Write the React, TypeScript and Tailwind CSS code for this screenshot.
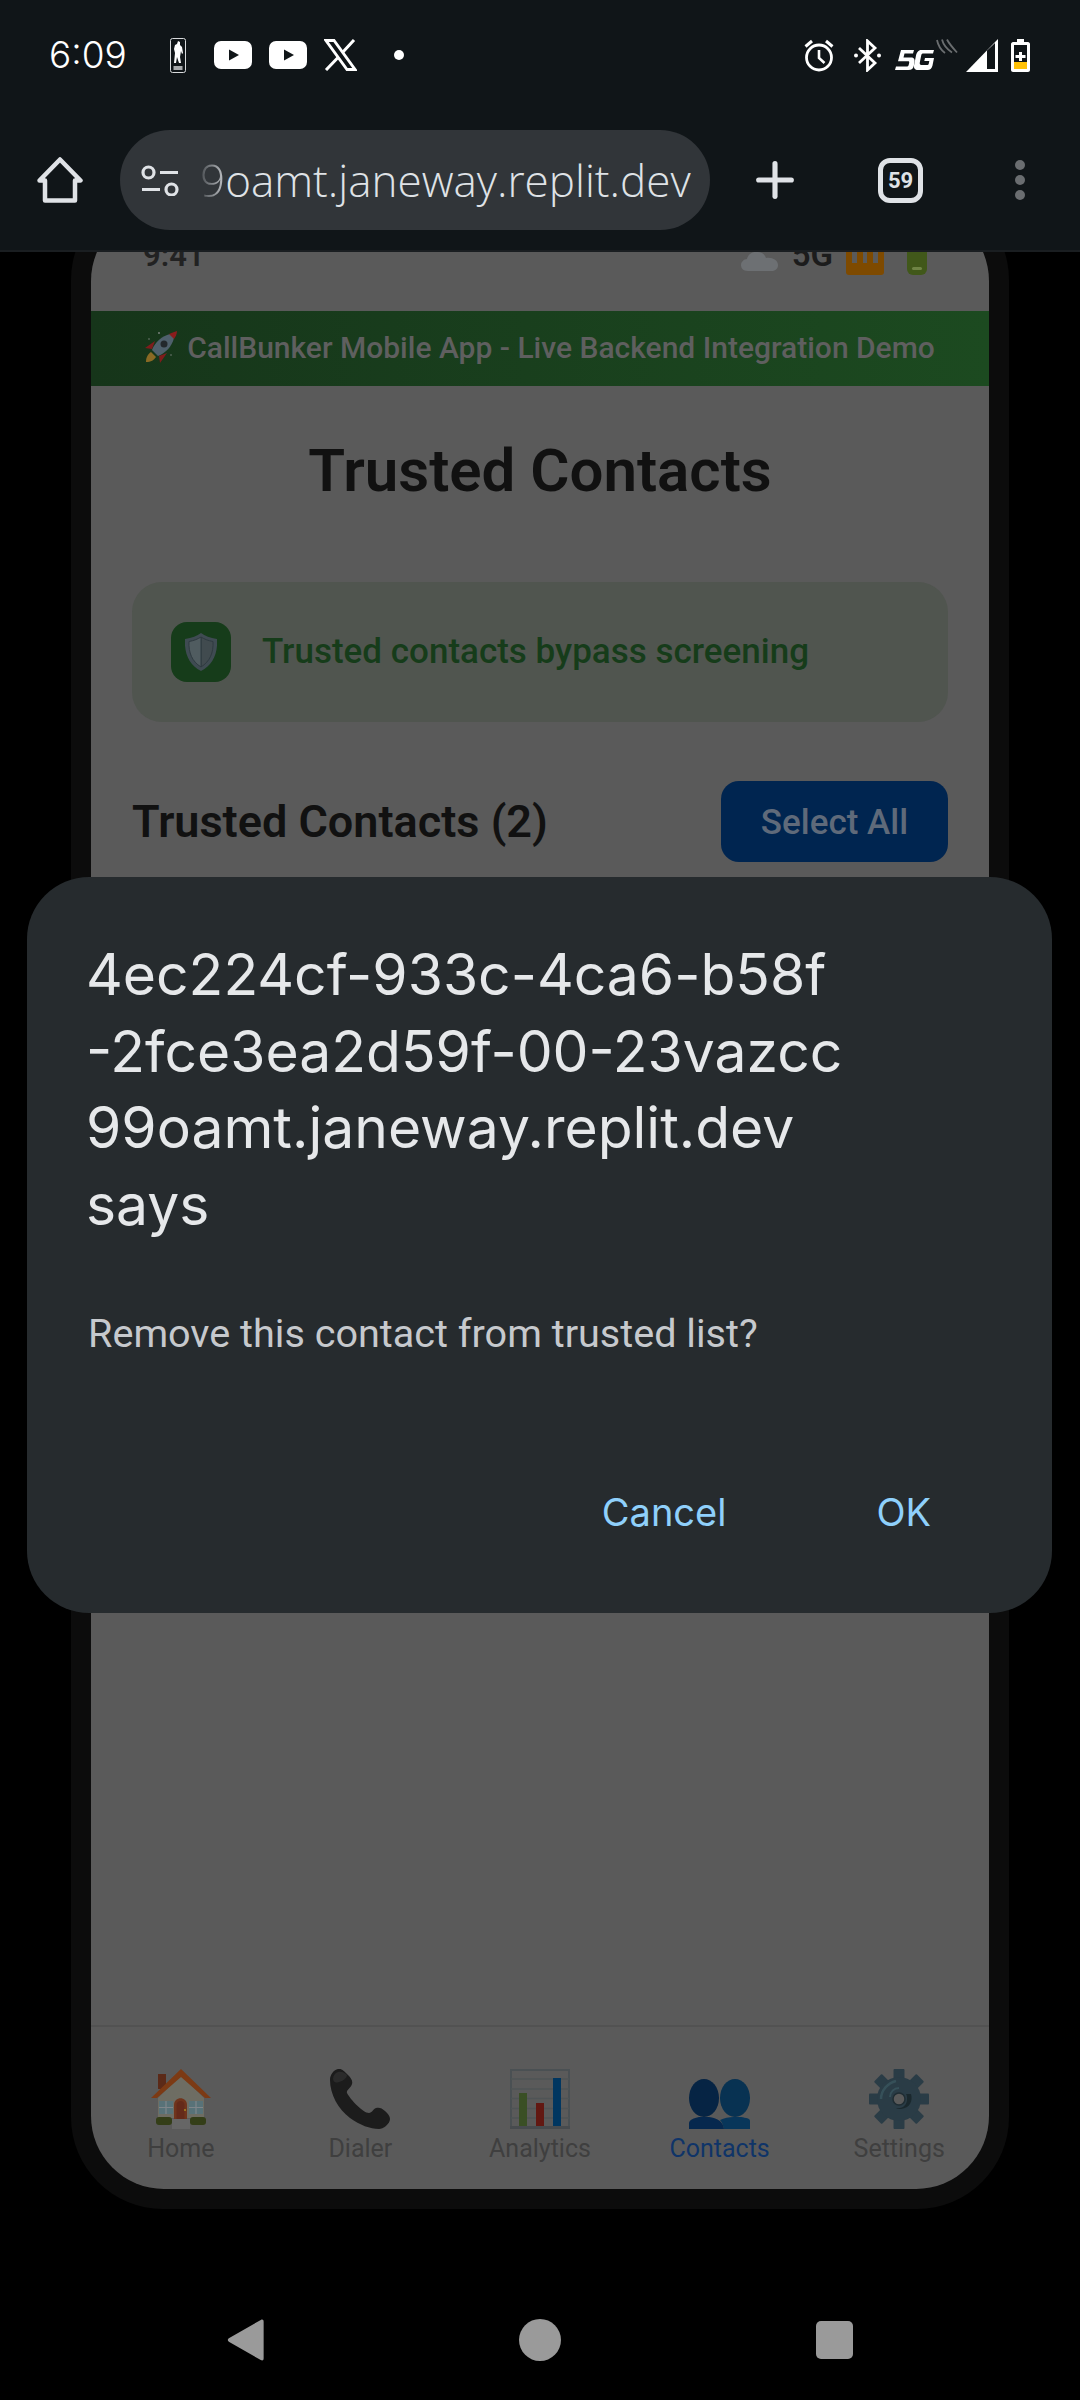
import { Plus } from "lucide-react";

const sans = "font-['Roboto',sans-serif]";
const urlFont = "font-['Open_Sans',sans-serif]";
const google = "font-['Inter',sans-serif]";

function NbaLogo() {
  return (
    <svg width="16" height="35" viewBox="0 0 16 35">
      <rect x="0.5" y="0.5" width="15" height="34" rx="2" fill="none" stroke="#d8dadc" strokeWidth="1" />
      <path d="M8 3l2 1 0 3 2 2 1 6-1 1-1-3-1 6 1 6h-2l-2-6-1 6H4l1-10-1-4 1-4 2-1z" fill="#fff" />
      <rect x="3.5" y="28" width="9" height="4" fill="#a8aaac" />
    </svg>
  );
}

function YouTube() {
  return (
    <svg width="38" height="28" viewBox="0 0 38 28">
      <rect width="38" height="28" rx="7" fill="#fff" />
      <path d="M15 8.500l10 5.500-10 5.500z" fill="#101518" />
    </svg>
  );
}

function XLogo() {
  return (
    <svg width="33" height="32" viewBox="0 0 33 32">
      <path d="M2 1.500h8L31 30.500h-8z" fill="none" stroke="#fff" strokeWidth="2.800" />
      <path d="M30 1L18.500 13.500M14 18.500L2 31" stroke="#fff" strokeWidth="3" />
    </svg>
  );
}

function Alarm() {
  return (
    <svg width="30" height="33" viewBox="0 0 30 33" fill="none" stroke="#fff">
      <circle cx="15" cy="18.500" r="12.500" strokeWidth="2.800" />
      <path d="M15 11v8l5.500 5" strokeWidth="2.600" />
      <path d="M1.500 7.500L8 2M28.500 7.500L22 2" strokeWidth="3" />
    </svg>
  );
}

function Bluetooth() {
  return (
    <svg width="27" height="33" viewBox="0 0 27 33" fill="none">
      <path d="M5 9l16 15-7.500 7V2L21 9 5 24" stroke="#fff" strokeWidth="2.800" />
      <circle cx="2" cy="16.500" r="2" fill="#fff" />
      <circle cx="25" cy="16.500" r="2" fill="#fff" />
    </svg>
  );
}

function FiveG() {
  return (
    <svg width="64" height="33" viewBox="0 0 64 33" fill="none">
      <path d="M6 11h13l-1 3.500H9.500l-1 4H16c3 0 4 2 3.500 4.500l-.6 3.500c-.7 3-2 4.500-5.500 4.500H0l1-3.500h10.500c1.500 0 2-.5 2.300-2l.4-1.800c.2-1-.2-1.500-1-1.500H3z" fill="#fff" />
      <path d="M26 11h13l-1 3.500H28.500c-1.500 0-2 .5-2.300 2l-1.400 7c-.3 1.500.2 2.500 1.500 2.500h5.500c1.200 0 1.800-.5 2-1.500l.5-2.500h-5l.7-3H39l-1.500 7.500c-.7 3-2.500 4.500-5 4.500H23c-3 0-4.500-2-4-4.500l2-10c.6-3 2.500-5.500 5-5.500z" fill="#fff" />
      <path d="M42 1c1 5 4 10 8 13M47 0.500c1 4 4 9 10 13M52 0.500c1.500 3 4.500 7 10 13" stroke="#6a6d6f" strokeWidth="1.800" />
    </svg>
  );
}

function Signal() {
  return (
    <svg width="32" height="33" viewBox="0 0 32 33" fill="none">
      <path d="M32 0v33H0z" fill="#fff" />
      <path d="M21 11.500L29 4v26h-8z" fill="#101518" />
    </svg>
  );
}

function Battery() {
  return (
    <svg width="19" height="33" viewBox="0 0 19 33" fill="none">
      <path d="M6 0h7v3h4c1 0 2 1 2 2v26c0 1-1 2-2 2H2c-1 0-2-1-2-2V5c0-1 1-2 2-2h4z" fill="#fff" />
      <rect x="3" y="6" width="13" height="24" fill="#101518" />
      <rect x="3" y="23" width="13" height="7" fill="#ffc107" />
      <path d="M8 13h3v3h3.500v3H11v3H8v-3H4.500v-3H8z" fill="#fff" />
    </svg>
  );
}

function ChromeHome() {
  return (
    <svg width="46" height="46" viewBox="0 0 46 46" fill="none" stroke="#dfe2e6" strokeWidth="4.500" strokeLinejoin="round">
      <path d="M2.500 23.500L23 2.500l20.500 21h-5.500V43.500H8V23.500z" />
    </svg>
  );
}

function Tune() {
  return (
    <svg width="38" height="31" viewBox="0 0 38 31" fill="none" stroke="#dfe2e6" strokeWidth="3.200">
      <circle cx="7.500" cy="7.500" r="5.500" />
      <path d="M19 7.500h18M1 24.500h18" />
      <circle cx="30.500" cy="24.500" r="5.500" />
    </svg>
  );
}

function Rocket() {
  return (
    <svg width="32" height="32" viewBox="0 0 32 32">
      <path d="M1 31c0-5 2-8 5-10l5 5c-2 3-5 5-10 5z" fill="#8a6a24" />
      <path d="M10 10L0 17l7 1zM22 22l-7 10-1-7z" fill="#7e1c1c" />
      <path d="M7 19C10 11 17 5 25 3l4 4c-2 8-8 15-16 18z" fill="#4f606c" />
      <path d="M24 3c2.500-1 5-2 8-3 0 3-1.500 6-3 8z" fill="#8a1c1c" />
      <circle cx="19" cy="13" r="3.500" fill="#23282c" />
      <circle cx="14" cy="2" r="1" fill="#77807a" />
      <circle cx="4" cy="8" r=".8" fill="#77807a" />
      <circle cx="26" cy="24" r=".8" fill="#77807a" />
    </svg>
  );
}

function Shield() {
  return (
    <svg width="32" height="38" viewBox="0 0 32 38">
      <path d="M16 0c4 3 9 5 16 6 1 14-4 26-16 32C4 32-1 20 0 6c7-1 12-3 16-6z" fill="#3f4b52" />
      <path d="M16 4c3 2 7 3.600 12 4.500.6 11-3 20-12 25.500z" fill="#414b4f" stroke="#2f3a40" strokeWidth="1" />
      <path d="M16 4C13 6 9 7.600 4 8.500 3.400 19.500 7 28.500 16 34z" fill="#505c60" stroke="#2f3a40" strokeWidth="1" />
    </svg>
  );
}

function HouseEmoji() {
  return (
    <svg width="60" height="60" viewBox="0 0 60 60">
      <rect x="7" y="5" width="8" height="15" fill="#5b2a18" />
      <path d="M7 29L30 6l23 23v20H7z" fill="#6e6d63" />
      <path d="M0 29L30 0l30 29h-6L30 8 6 29z" fill="#7c3a14" />
      <path d="M8 32h14v13H8zM38 32h14v13H38z" fill="#587278" />
      <path d="M15 32v13M8 38.500h14M45 32v13M38 38.500h14" stroke="#80868a" strokeWidth="1.200" />
      <path d="M23 50V36c0-9 13-9 13 0v14z" fill="#70341c" />
      <path d="M25.500 50V36c0-5.500 8-5.500 8 0v14z" fill="#642a1a" />
      <circle cx="34" cy="41" r="1" fill="#a88a20" />
      <rect x="5" y="48" width="16" height="8" rx="3" fill="#343e18" />
      <rect x="39" y="48" width="16" height="8" rx="3" fill="#343e18" />
      <rect x="21" y="50" width="18" height="10" fill="#666" />
    </svg>
  );
}

function PhoneEmoji() {
  return (
    <svg width="60" height="60" viewBox="0 0 60 60">
      <path d="M8 0C4 1 0 5 0 11c0 14 8 29 20 38 10 7 20 11 29 11 4 0 11-5 11-10 0-3-2-5-5-8-3-3-6-4-9-3-3 1-4 5-7 5-6 0-19-14-22-20-1-3 4-5 5-9 1-3-1-6-4-9C15 3 12-1 8 0z" fill="#1c1c1c" />
      <path d="M8 3C5 4 3 7 3 10c1 4 3 4 6 3 4-1 8-4 8-7-2-2-5-4-9-3z" fill="#2b2b2b" />
    </svg>
  );
}

function ChartEmoji() {
  return (
    <svg width="60" height="60" viewBox="0 0 60 60">
      <rect x="1" y="1" width="58" height="58" fill="none" stroke="#4a5053" strokeWidth="2" />
      <path d="M1 10h58M1 20h58M1 29.500h58M1 39.500h58M1 49h58" stroke="#4f5456" strokeWidth="1.500" />
      <rect x="9" y="24" width="8" height="35" fill="#3a4f25" />
      <rect x="26" y="34" width="8" height="25" fill="#621812" />
      <rect x="43" y="9" width="8" height="50" fill="#003660" />
      <rect x="0" y="57" width="60" height="3" fill="#474b4e" />
    </svg>
  );
}

function PeopleEmoji() {
  return (
    <svg width="61" height="50" viewBox="0 0 61 50">
      <ellipse cx="46" cy="19" rx="15" ry="19" fill="#083252" />
      <path d="M31 41c4-2 9-3 14-3h7c5 1 9 1 9 4v8H35c-1-4-2-7-4-9z" fill="#08365a" />
      <ellipse cx="15" cy="19" rx="15" ry="19" fill="#062444" />
      <path d="M0 50v-6c0-3 5-5 10-6h10c8 1 14 4 15 12z" fill="#06284e" />
    </svg>
  );
}

function GearEmoji() {
  return (
    <svg width="60" height="60" viewBox="0 0 60 60">
      <g fill="#2a3c46">
        <rect x="24.500" y="0" width="11" height="60" rx="1" />
        <rect x="24.500" y="0" width="11" height="60" rx="1" transform="rotate(45 30 30)" />
        <rect x="24.500" y="0" width="11" height="60" rx="1" transform="rotate(90 30 30)" />
        <rect x="24.500" y="0" width="11" height="60" rx="1" transform="rotate(135 30 30)" />
        <circle cx="30" cy="30" r="22" />
      </g>
      <path d="M12 30c0-9 7-16 15-18" fill="none" stroke="#365059" strokeWidth="2.500" />
      <path d="M21 28c0-5 4-9 9-9" fill="none" stroke="#365059" strokeWidth="2" />
      <path d="M42 25c2 7-1 14-10 15-2 0-4 0-5-1 7 1 11-3 11-9 0-2 0-4-1-5z" fill="#1a282d" />
      <circle cx="30" cy="30" r="6" fill="#5a5a5a" stroke="#1f2d33" strokeWidth="1.500" />
    </svg>
  );
}

const navItems = [
  { label: "Home", icon: <HouseEmoji />, active: false },
  { label: "Dialer", icon: <PhoneEmoji />, active: false },
  { label: "Analytics", icon: <ChartEmoji />, active: false },
  { label: "Contacts", icon: <PeopleEmoji />, active: true },
  { label: "Settings", icon: <GearEmoji />, active: false },
];

export default function App() {
  return (
    <div className={`relative flex h-[2400px] w-[1080px] flex-col overflow-hidden bg-black ${sans}`}>
      {/* Chrome */}
      <header className="relative z-10 h-[252px] shrink-0 border-b-2 border-[#1a1e21] bg-[#101518]">
        <div className="flex h-[110px] items-center justify-between pl-[49px] pr-[50px]">
          <div className="flex items-center">
            <span className={`w-[121px] text-[37px] font-light text-white ${google}`}>6:09</span>
            <div className="flex items-center gap-[17px]">
              <span className="mr-[11px]"><NbaLogo /></span>
              <YouTube />
              <YouTube />
              <XLogo />
              <span className="ml-[20px] h-[10px] w-[10px] rounded-full bg-white" />
            </div>
          </div>
          <div className="flex items-center">
            <Alarm />
            <span className="ml-[20px]"><Bluetooth /></span>
            <span className="ml-[14px]"><FiveG /></span>
            <span className="ml-[7px]"><Signal /></span>
            <span className="ml-[13px]"><Battery /></span>
          </div>
        </div>
        <div className="mt-[20px] flex h-[100px] items-center">
          <div className="flex w-[120px] justify-center"><ChromeHome /></div>
          <div className="flex h-[100px] w-[590px] items-center rounded-full bg-[#313539] pl-[21px]">
            <Tune />
            <span className={`ml-[21px] whitespace-nowrap text-[44px] font-light text-[#dfe2e6] ${urlFont}`}>
              <span className="bg-gradient-to-r from-[#4a4e52] to-[#c4c7cb] bg-clip-text text-transparent">9</span>oamt.janeway.replit.dev
            </span>
          </div>
          <div className="flex w-[130px] justify-center">
            <Plus size={56} strokeWidth={2.2} className="text-[#dfe2e6]" />
          </div>
          <div className={`ml-[38px] flex h-[45px] w-[45px] items-center justify-center rounded-[12px] border-[5px] border-[#dfe2e6] text-[22px] font-bold text-[#dfe2e6] ${sans}`}>59</div>
          <div className="ml-[92px] flex flex-col gap-[5px]">
            <span className="h-[10px] w-[10px] rounded-full bg-[#6a6d70]" />
            <span className="h-[10px] w-[10px] rounded-full bg-[#6a6d70]" />
            <span className="h-[10px] w-[10px] rounded-full bg-[#6a6d70]" />
          </div>
        </div>
      </header>

      {/* Phone mockup page behind the dialog */}
      <main className="min-h-0 flex-1 overflow-hidden">
        <div className="mx-auto -mt-[64px] h-[2021px] w-[938px] rounded-[92px] bg-[#0c0c0c] p-[20px]">
          <div className="flex h-full flex-col overflow-hidden rounded-[73px] bg-[#5a5a5a]">
            <div className="flex h-[103px] shrink-0 items-end justify-between pb-[40px] pl-[52px] pr-[62px]">
              <span className="text-[31px] font-semibold leading-none text-[#222222]">9:41</span>
              <div className="flex items-end">
                <svg width="37" height="22" viewBox="0 0 37 22" className="mr-[14px]">
                  <path d="M7 22C2 22 0 19 0 16c0-3 3-6 6-6 1-5 6-8 11-7 4 0 7 3 8 6 6-1 12 2 12 7 0 4-3 6-7 6z" fill="#6d7073" />
                </svg>
                <span className="mr-[13px] text-[33px] font-semibold leading-none text-[#1c1c1c]">5G</span>
                <span className="-mb-[4px] mr-[23px] flex h-[40px] w-[38px] items-start justify-center gap-[6px] rounded-[3px] bg-[#7e4a00] pb-[6px]">
                  <i className="h-[28px] w-[5px] bg-[#5a5a5a]" />
                  <i className="h-[28px] w-[4px] bg-[#5a5a5a]" />
                  <i className="h-[28px] w-[5px] bg-[#5a5a5a]" />
                </span>
                <span className="-mb-[4px] flex h-[40px] w-[20px] items-end justify-center rounded-[6px] bg-[#41581a] pb-[5px]">
                  <i className="h-[3px] w-[10px] rounded-full bg-[#6f8445]" />
                </span>
              </div>
            </div>
            <div className="flex h-[75px] shrink-0 items-center justify-center gap-[10px] bg-gradient-to-r from-[#16351a] to-[#1c4a20] pb-[3px] text-[30px] font-medium text-[#5f5f5f]">
              <Rocket />
              <span>CallBunker Mobile App - Live Backend Integration Demo</span>
            </div>
            <h1 className="mt-[50px] text-center text-[60px] font-semibold leading-[70px] text-[#111111]">Trusted Contacts</h1>
            <div className="mx-[41px] mt-[76px] flex h-[140px] items-center rounded-[30px] bg-[#50554f] pl-[39px]">
              <span className="flex h-[60px] w-[60px] items-center justify-center rounded-[16px] bg-[#163c1a]"><Shield /></span>
              <span className="ml-[31px] text-[35px] font-medium text-[#163c1a]">Trusted contacts bypass screening</span>
            </div>
            <div className="mx-[41px] mt-[59px] flex h-[81px] items-center justify-between">
              <span className="text-[45px] font-semibold text-[#111111]">Trusted Contacts (2)</span>
              <span className="flex h-[81px] w-[227px] items-center justify-center rounded-[18px] bg-[#002550] pt-[3px] text-[35px] font-medium text-[#5f6a7a]">Select All</span>
            </div>
            <div className="flex-1" />
            <nav className="grid h-[164px] shrink-0 grid-cols-5 border-t-2 border-[#525252] pt-[40px]">
              {navItems.map((item) => (
                <div key={item.label} className="flex flex-col items-center">
                  <div className="flex h-[62px] items-end">{item.icon}</div>
                  <span className={`mt-[2px] text-[25px] leading-[36px] ${item.active ? "text-[#0f3468]" : "text-[#3f3f3f]"}`}>{item.label}</span>
                </div>
              ))}
            </nav>
          </div>
        </div>
      </main>

      {/* Android navigation */}
      <footer className="flex h-[120px] shrink-0 items-center justify-center gap-[255px]">
        <svg width="37" height="42" viewBox="0 0 38 44"><path d="M35 1c2-1 3 0 3 2v38c0 2-1 3-3 2L2 24c-2-1-2-3 0-4z" fill="#9a9a9a" /></svg>
        <span className="h-[42px] w-[42px] rounded-full bg-[#9a9a9a]" />
        <span className="h-[38px] w-[37px] rounded-[5px] bg-[#9a9a9a]" />
      </footer>

      {/* JS confirm dialog */}
      <div className="absolute left-[27px] top-[877px] flex h-[736px] w-[1025px] flex-col rounded-[62px] bg-[#262b2e] pl-[59px] pr-[60px] pt-[60px]">
        <h2 className={`w-[880px] text-[57px] font-normal leading-[76.500px] text-[#e6e8ea] ${google}`}>
          4ec224cf-933c-4ca6-b58f<br />-2fce3ea2d59f-00-23vazcc<br />99oamt.janeway.replit.dev<br />says
        </h2>
        <p className="mt-[66px] pl-[2px] text-[39.600px] leading-[50px] text-[#c6c9cd]">Remove this contact from trusted list?</p>
        <div className={`mt-[125px] flex justify-end gap-[150px] pr-[61px] text-[38px] text-[#8fd0fb] ${google}`}>
          <span>Cancel</span>
          <span>OK</span>
        </div>
      </div>
    </div>
  );
}
